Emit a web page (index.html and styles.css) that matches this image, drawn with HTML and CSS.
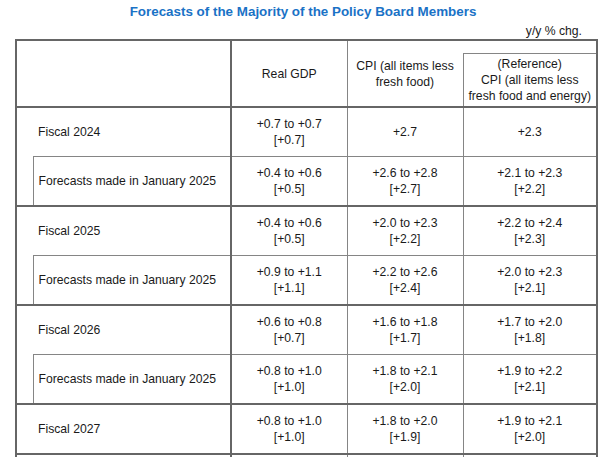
FILE: index.html
```html
<!DOCTYPE html>
<html lang="en">
<head>
<meta charset="utf-8">
<title>Forecasts of the Majority of the Policy Board Members</title>
<link rel="stylesheet" href="styles.css">
</head>
<body>
<h1 class="title">Forecasts of the Majority of the Policy Board Members</h1>
<div class="unit">y/y % chg.</div>
<table class="fc">
  <colgroup>
    <col class="c-ind"><col class="c-lab"><col class="c-gdp"><col class="c-cpi"><col class="c-ref">
  </colgroup>
  <thead>
    <tr class="h-top">
      <th class="corner" colspan="2" rowspan="2"></th>
      <th class="gdp" rowspan="2">Real GDP</th>
      <th class="cpi" rowspan="2">CPI (all items less<br>fresh food)</th>
      <th class="refgap"></th>
    </tr>
    <tr class="h-bot">
      <th class="ref">(Reference)<br>CPI (all items less<br>fresh food and energy)</th>
    </tr>
  </thead>
  <tbody>
    <tr class="fy">
      <td class="ind" rowspan="2"></td>
      <td class="lab">Fiscal 2024</td>
      <td class="gdp">+0.7 to +0.7<br>[+0.7]</td>
      <td>+2.7</td>
      <td>+2.3</td>
    </tr>
    <tr class="jan">
      <td class="lab sub">Forecasts made in January 2025</td>
      <td class="gdp">+0.4 to +0.6<br>[+0.5]</td>
      <td>+2.6 to +2.8<br>[+2.7]</td>
      <td>+2.1 to +2.3<br>[+2.2]</td>
    </tr>
    <tr class="fy">
      <td class="ind" rowspan="2"></td>
      <td class="lab">Fiscal 2025</td>
      <td class="gdp">+0.4 to +0.6<br>[+0.5]</td>
      <td>+2.0 to +2.3<br>[+2.2]</td>
      <td>+2.2 to +2.4<br>[+2.3]</td>
    </tr>
    <tr class="jan">
      <td class="lab sub">Forecasts made in January 2025</td>
      <td class="gdp">+0.9 to +1.1<br>[+1.1]</td>
      <td>+2.2 to +2.6<br>[+2.4]</td>
      <td>+2.0 to +2.3<br>[+2.1]</td>
    </tr>
    <tr class="fy">
      <td class="ind" rowspan="2"></td>
      <td class="lab">Fiscal 2026</td>
      <td class="gdp">+0.6 to +0.8<br>[+0.7]</td>
      <td>+1.6 to +1.8<br>[+1.7]</td>
      <td>+1.7 to +2.0<br>[+1.8]</td>
    </tr>
    <tr class="jan">
      <td class="lab sub">Forecasts made in January 2025</td>
      <td class="gdp">+0.8 to +1.0<br>[+1.0]</td>
      <td>+1.8 to +2.1<br>[+2.0]</td>
      <td>+1.9 to +2.2<br>[+2.1]</td>
    </tr>
    <tr class="fy">
      <td class="ind"></td>
      <td class="lab">Fiscal 2027</td>
      <td class="gdp">+0.8 to +1.0<br>[+1.0]</td>
      <td>+1.8 to +2.0<br>[+1.9]</td>
      <td>+1.9 to +2.1<br>[+2.0]</td>
    </tr>
    <tr class="fy more">
      <td class="ind"></td>
      <td class="lab"></td>
      <td class="gdp"></td>
      <td></td>
      <td></td>
    </tr>
  </tbody>
</table>
</body>
</html>
```
FILE: styles.css
```css
html, body {
  margin: 0;
  padding: 0;
  overflow: hidden;
  background: #ffffff;
}

body {
  font-family: "Liberation Sans", Arial, sans-serif;
  color: #1a1a1a;
}

.title {
  margin: 4px 0 0 6px;
  font-size: 13.4px;
  line-height: 16px;
  font-weight: bold;
  color: #1a72c6;
  text-align: center;
}

.unit {
  margin-top: 4px;
  padding-right: 18px;
  font-size: 12.2px;
  line-height: 14px;
  text-align: right;
}

.fc {
  margin: 1px 0 0 15px;
  width: 581px;
  table-layout: fixed;
  border-collapse: collapse;
  border: 2px solid #666666;
  font-size: 12.2px;
}

.c-ind { width: 17px; }
.c-lab { width: 198px; }
.c-gdp { width: 116px; }
.c-cpi { width: 116px; }
.c-ref { width: 134px; }

.fc th,
.fc td {
  border: 1px solid #858585;
  padding: 0;
  font-weight: normal;
  text-align: center;
  vertical-align: middle;
}

.fc th {
  line-height: 16px;
}

.fc td {
  line-height: 16px;
}

.h-top { height: 13px; }
.h-bot { height: 54px; }

.fc th.corner {
  border-right: 2px solid #666666;
  border-bottom: 2px solid #666666;
}

.fc th.gdp,
.fc th.cpi {
  border-bottom: 2px solid #666666;
}

.fc th.refgap {
  border-left: hidden;
}

.fc th.ref {
  border-bottom: 2px solid #666666;
}

.fc td.gdp {
  border-left: 2px solid #666666;
}

.fy td,
.jan td {
  height: 48px;
}

.fc .fy td {
  border-top: 2px solid #666666;
}

.fc td.ind {
  border-right: none;
}

.fc .fy td.lab {
  border-left: none;
  text-align: left;
  padding-left: 5px;
}

.fc td.lab.sub {
  border-left: 1px solid #858585;
  text-align: left;
  padding-left: 5px;
}

.fc .more td {
  height: 30px;
}
```
